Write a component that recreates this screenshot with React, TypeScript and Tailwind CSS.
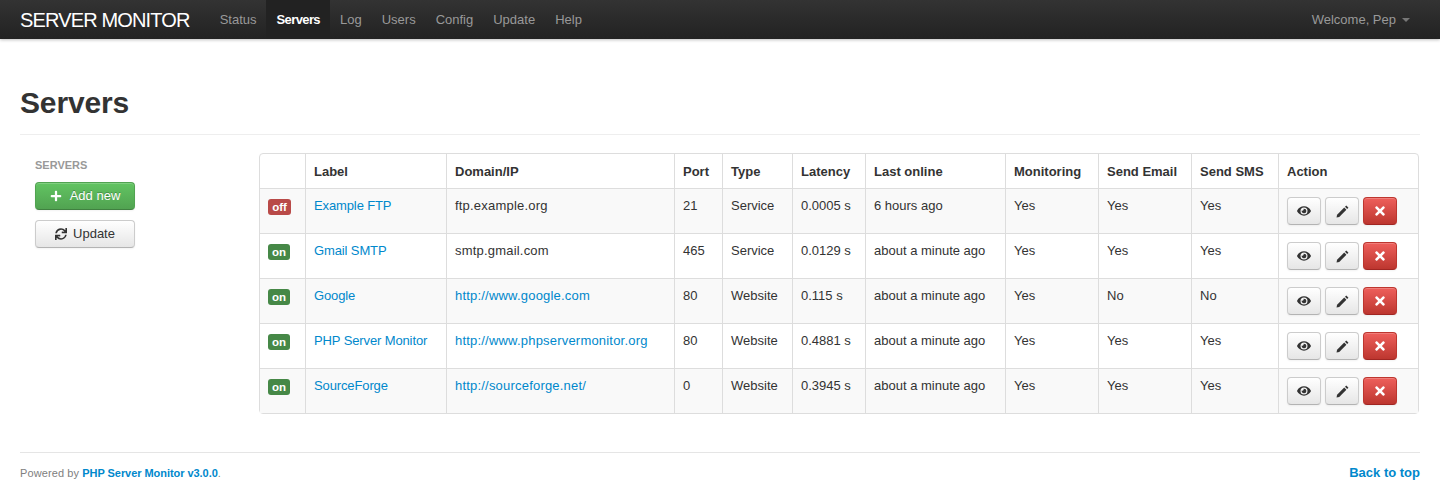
import { FaEye, FaPlus, FaSync, FaTimes } from "react-icons/fa";

const navItems = ["Status", "Servers", "Log", "Users", "Config", "Update", "Help"];

const columns = [
  { title: "", width: "w-[45px]" },
  { title: "Label", width: "w-[141px]" },
  { title: "Domain/IP", width: "w-[228px]" },
  { title: "Port", width: "w-[48px]" },
  { title: "Type", width: "w-[70px]" },
  { title: "Latency", width: "w-[73px]" },
  { title: "Last online", width: "w-[140px]" },
  { title: "Monitoring", width: "w-[93px]" },
  { title: "Send Email", width: "w-[93px]" },
  { title: "Send SMS", width: "w-[87px]" },
  { title: "Action", width: "" },
];

const servers = [
  { on: false, label: "Example FTP", domain: "ftp.example.org", link: false, port: "21", type: "Service", latency: "0.0005 s", last: "6 hours ago", email: "Yes", sms: "Yes" },
  { on: true, label: "Gmail SMTP", domain: "smtp.gmail.com", link: false, port: "465", type: "Service", latency: "0.0129 s", last: "about a minute ago", email: "Yes", sms: "Yes" },
  { on: true, label: "Google", domain: "http://www.google.com", link: true, port: "80", type: "Website", latency: "0.115 s", last: "about a minute ago", email: "No", sms: "No" },
  { on: true, label: "PHP Server Monitor", domain: "http://www.phpservermonitor.org", link: true, port: "80", type: "Website", latency: "0.4881 s", last: "about a minute ago", email: "Yes", sms: "Yes" },
  { on: true, label: "SourceForge", domain: "http://sourceforge.net/", link: true, port: "0", type: "Website", latency: "0.3945 s", last: "about a minute ago", email: "Yes", sms: "Yes" },
];

const cell = "border-t border-l border-[#dddddd] px-2 pt-2 pb-2 align-top first:border-l-0";

function ActionButton({ danger, children }: { danger?: boolean; children: React.ReactNode }) {
  return (
    <button
      className={
        danger
          ? "flex h-[28px] w-[34px] items-center justify-center rounded-[4px] border border-[#bd362f] border-b-[#a02622] bg-gradient-to-b from-[#ee5f5b] to-[#bd362f] text-[14px] text-white shadow-[inset_0_1px_0_rgba(255,255,255,0.2),0_1px_2px_rgba(0,0,0,0.05)]"
          : "flex h-[28px] w-[34px] items-center justify-center rounded-[4px] border border-[#cccccc] border-b-[#b3b3b3] bg-gradient-to-b from-white to-[#e6e6e6] text-[14px] text-[#333333] shadow-[inset_0_1px_0_rgba(255,255,255,0.2),0_1px_2px_rgba(0,0,0,0.05)]"
      }
    >
      {children}
    </button>
  );
}

function PencilIcon() {
  return (
    <svg viewBox="0 0 12 12" className="h-[13px] w-[13px]" fill="currentColor">
      <path d="M9.5 0.5 L11.5 2.5 L10.3 3.7 L8.3 1.7 Z" />
      <path d="M7.6 2.4 L9.6 4.4 L3 11 L0.5 11.5 L1 9 Z" />
    </svg>
  );
}

export default function App() {
  return (
    <div className="min-h-[492px] bg-white font-['Liberation_Sans',Arial,sans-serif] text-[13px] leading-[18px] text-[#333333]">
      <nav className="flex h-[39px] items-stretch justify-between bg-gradient-to-b from-[#333333] to-[#222222] pl-5 pr-[20px] shadow-[0_1px_3px_rgba(0,0,0,0.25)]">
        <div className="flex items-stretch">
          <a className="mr-[10px] flex items-center pr-[10px] text-[20px] tracking-[-0.85px] text-white">SERVER MONITOR</a>
          {navItems.map((item) =>
            item === "Servers" ? (
              <a key={item} className="flex items-center bg-[#222222] px-[10px] font-bold tracking-[-0.6px] text-white">
                {item}
              </a>
            ) : (
              <a key={item} className="flex items-center px-[10px] text-[#999999]">
                {item}
              </a>
            )
          )}
        </div>
        <div className="flex items-center pr-[10px] text-[#999999]">
          Welcome, Pep
          <span className="ml-[6px] mt-[1px] h-0 w-0 border-x-4 border-t-4 border-x-transparent border-t-[#777777]" />
        </div>
      </nav>

      <main className="px-5">
        <div className="mt-[44px] border-b border-[#eeeeee] pb-[11px]">
          <h1 className="text-[30px] leading-[40px] font-bold tracking-[-0.15px] text-[#333333]">Servers</h1>
        </div>

        <div className="mt-[18px] flex">
          <aside className="w-[239px] shrink-0 pl-[15px]">
            <div className="mt-[3px] text-[11px] leading-[18px] font-bold text-[#999999] uppercase">Servers</div>
            <button className="mt-[8px] flex h-[28px] w-[100px] items-center justify-center gap-[8px] rounded-[4px] border border-[#51a351] border-b-[#408140] bg-gradient-to-b from-[#62c462] to-[#51a351] text-white shadow-[inset_0_1px_0_rgba(255,255,255,0.2),0_1px_2px_rgba(0,0,0,0.05)] [text-shadow:0_-1px_0_rgba(0,0,0,0.25)]">
              <FaPlus className="text-[12px]" />
              <span>Add new</span>
            </button>
            <button className="mt-[10px] flex h-[28px] w-[100px] items-center justify-center gap-[6px] rounded-[4px] border border-[#cccccc] border-b-[#b3b3b3] bg-gradient-to-b from-white to-[#e6e6e6] text-[#333333] shadow-[inset_0_1px_0_rgba(255,255,255,0.2),0_1px_2px_rgba(0,0,0,0.05)]">
              <FaSync className="text-[12px]" />
              <span>Update</span>
            </button>
          </aside>

          <table className="w-[1160px] table-fixed border-separate border-spacing-0 rounded-[4px] border border-[#dddddd]">
            <thead>
              <tr>
                {columns.map((col, i) => (
                  <th
                    key={i}
                    className={`${col.width} border-l border-[#dddddd] px-2 pt-[9px] pb-[7px] text-left font-bold first:border-l-0`}
                  >
                    {col.title}
                  </th>
                ))}
              </tr>
            </thead>
            <tbody>
              {servers.map((s) => (
                <tr key={s.label} className="h-[45px] odd:bg-[#f9f9f9]">
                  <td className={`${cell} pt-[10px]`}>
                    {s.on ? (
                      <span className="block w-[22px] rounded-[3px] bg-[#468847] text-center text-[11.5px] leading-[16px] font-bold text-white">on</span>
                    ) : (
                      <span className="block w-[23px] rounded-[3px] bg-[#b94a48] text-center text-[11.5px] leading-[16px] font-bold text-white">off</span>
                    )}
                  </td>
                  <td className={cell}>
                    <a className="tracking-[-0.12px] text-[#0088cc]">{s.label}</a>
                  </td>
                  <td className={`${cell} tracking-[0.2px]`}>{s.link ? <a className="text-[#0088cc]">{s.domain}</a> : s.domain}</td>
                  <td className={cell}>{s.port}</td>
                  <td className={cell}>{s.type}</td>
                  <td className={cell}>{s.latency}</td>
                  <td className={cell}>{s.last}</td>
                  <td className={cell}>Yes</td>
                  <td className={cell}>{s.email}</td>
                  <td className={cell}>{s.sms}</td>
                  <td className={cell}>
                    <div className="flex gap-[4px]">
                      <ActionButton>
                        <FaEye />
                      </ActionButton>
                      <ActionButton>
                        <PencilIcon />
                      </ActionButton>
                      <ActionButton danger>
                        <FaTimes />
                      </ActionButton>
                    </div>
                  </td>
                </tr>
              ))}
            </tbody>
          </table>
        </div>

        <footer className="mt-[38px] flex items-center justify-between border-t border-[#e5e5e5] pt-[11px]">
          <p className="text-[11px] tracking-[0.1px] text-[#808080]">
            Powered by <a className="font-bold tracking-[-0.05px] text-[#0088cc]">PHP Server Monitor v3.0.0</a>.
          </p>
          <a className="font-bold text-[#0088cc]">Back to top</a>
        </footer>
      </main>
    </div>
  );
}
